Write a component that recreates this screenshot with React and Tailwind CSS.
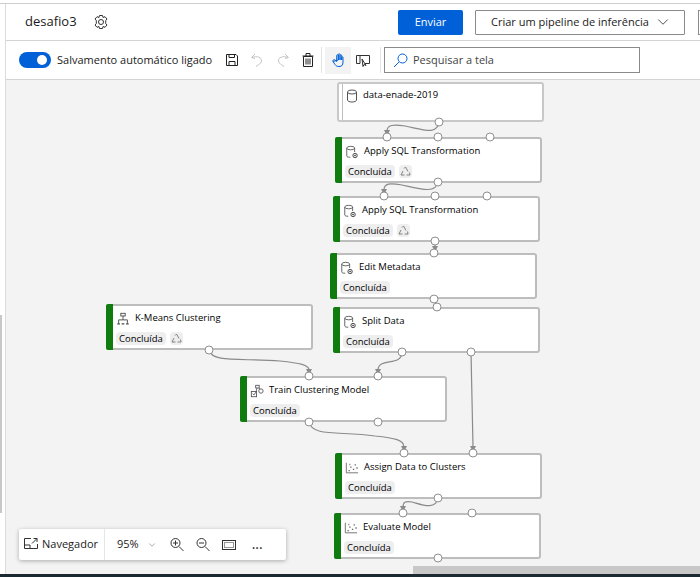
import React from "react";
import { ChevronDown } from "lucide-react";

const font = "font-['Open_Sans','Noto_Sans',sans-serif]";

// lefts are relative to the canvas, which starts at x=6
const nodes = [
  { name: "Apply SQL Transformation", pos: "left-[329px] top-[57px]", icon: "db", recycle: true },
  { name: "Apply SQL Transformation", pos: "left-[327px] top-[116px]", icon: "db", recycle: true },
  { name: "Edit Metadata", pos: "left-[324px] top-[173px]", icon: "db" },
  { name: "Split Data", pos: "left-[327px] top-[227px]", icon: "db" },
  { name: "K-Means Clustering", pos: "left-[100px] top-[224px]", icon: "tree", recycle: true },
  { name: "Train Clustering Model", pos: "left-[234px] top-[296px]", icon: "train" },
  { name: "Assign Data to Clusters", pos: "left-[329px] top-[373px]", icon: "chart" },
  { name: "Evaluate Model", pos: "left-[328px] top-[433px]", icon: "chart" },
];

const ports = [
  [439, 123], [387, 138], [438, 138], [490, 138], [438, 183],
  [384, 197], [435, 197], [487, 197], [435, 242],
  [434, 254], [434, 300], [437, 308], [402, 353], [471, 353],
  [209, 351], [309, 377], [378, 377], [309, 423], [378, 423],
  [404, 454], [473, 454], [438, 499],
  [403, 514], [472, 514], [438, 559],
];

const edges = [
  "M439 123C437 136 425 131 405 127C393 125 387 126 387 132",
  "M438 183C436 195 420 190 402 186C390 184 384 184 384 191",
  "M435 242V248",
  "M434 300L437 308",
  "M402 353C402 368 378 358 378 371",
  "M471 353L473 448",
  "M209 351C212 364 240 359 280 362C300 364 309 366 309 371",
  "M309 423C312 438 340 432 375 437C395 439 404 441 404 448",
  "M438 499C436 512 420 505 412 503C405 502 403 503 403 508",
];

const arrows = [
  [387, 137], [384, 196], [435, 253], [378, 376], [473, 453], [309, 376], [404, 453], [403, 513],
];

const NodeIcon = ({ type }) => {
  if (type === "tree") {
    return (
      <svg width="14" height="14" viewBox="0 0 16 16" fill="none" stroke="#444" strokeWidth="1">
        <rect x="5.5" y="1.5" width="5" height="3" />
        <path d="M8 4.5V9M3 13V9H13V13" />
        <path d="M1.5 13.5h3M6.5 13.5h3M11.5 13.5h3" strokeWidth="1.5" />
      </svg>
    );
  }
  if (type === "train") {
    return (
      <svg width="14" height="14" viewBox="0 0 16 16" fill="none" stroke="#555" strokeWidth="1">
        <rect x="1.5" y="8.5" width="6" height="6" />
        <path d="M3 11l1.5 1.5L7 9" />
        <rect x="6.5" y="1.5" width="4" height="3" />
        <circle cx="12.5" cy="8" r="2.5" />
        <path d="M8 4.5L7 8.5M10 4.5L11.5 6" />
      </svg>
    );
  }
  if (type === "chart") {
    return (
      <svg width="14" height="14" viewBox="0 0 16 16" fill="none" stroke="#666" strokeWidth="1">
        <path d="M1.5 2V13.5H15" />
        <path d="M4 11h1.5M6 7h1.5M9 9.5h1.5M11 4.5h1.5M13 8h1.5M5 4h1" strokeWidth="1.5" />
      </svg>
    );
  }
  return (
    <svg width="14" height="14" viewBox="0 0 16 16" fill="none" stroke="#555" strokeWidth="1">
      <path d="M2 3.5V12.5C2 13.5 3.5 14 6 14M11 3.5V8" />
      <ellipse cx="6.5" cy="3.5" rx="4.5" ry="2" />
      <circle cx="11.5" cy="12" r="2.5" stroke="#333" />
      <circle cx="11.5" cy="12" r="0.7" fill="#333" />
    </svg>
  );
};

const Recycle = () => (
  <span className="flex h-[13px] w-[13px] items-center justify-center rounded-sm bg-[#eeeeee]">
    <svg width="11" height="11" viewBox="0 0 11 11" fill="none" stroke="#777" strokeWidth="0.9">
      <path d="M4 2.5L5.5 1L8 5.5M9.5 6.5L10 9H6.5M4.5 9H1L3 5" />
    </svg>
  </span>
);

const Node = ({ name, pos, icon, recycle }) => (
  <div className={`absolute ${pos} flex h-[46px] w-[207px] rounded-[3px] border-2 border-l-0 border-[#bdbdbd] bg-white`}>
    <div className="-my-[2px] w-[7px] shrink-0 rounded-l-[2px] bg-[#107c10]" />
    <div className="flex min-w-0 flex-col pl-[3px]">
      <div className="mt-[4px] flex h-[17px] items-center gap-[3px]">
        <span className="flex w-[16px] justify-start">
          <NodeIcon type={icon} />
        </span>
        <span className="whitespace-nowrap text-[9.5px] text-black">{name}</span>
      </div>
      <div className="mt-[5px] flex items-center gap-[4px]">
        <span className="rounded-sm bg-[#eeeeee] px-[3px] text-[9.5px] leading-[13px] text-black">Concluída</span>
        {recycle && <Recycle />}
      </div>
    </div>
  </div>
);

const Graph = () => (
  <svg className="absolute inset-0" width="694" height="493" viewBox="6 81 694 493" fill="none">
    {edges.map((d) => (
      <path key={d} d={d} stroke="#8a8a8a" strokeWidth="1.2" />
    ))}
    {arrows.map(([x, y]) => (
      <path key={`${x}-${y}`} d={`M${x - 3} ${y - 6}H${x + 3}L${x} ${y}Z`} fill="#8a8a8a" />
    ))}
    {ports.map(([x, y]) => (
      <circle key={`${x}-${y}`} cx={x} cy={y} r="4" fill="white" stroke="#8f8f8f" />
    ))}
  </svg>
);

const ToolIcon = ({ children, className = "" }) => (
  <svg className={`shrink-0 ${className}`} width="16" height="16" viewBox="0 0 16 16" fill="none" stroke="currentColor" strokeWidth="1">
    {children}
  </svg>
);

const Toolbar = () => (
  <div className="flex h-[39px] items-center border-b border-[#d4d4d4] pl-[13px]">
    <div className="flex h-[16px] w-[32px] items-center justify-end rounded-full bg-[#0060d8] pr-[4px]">
      <div className="h-[10px] w-[10px] rounded-full bg-white" />
    </div>
    <span className="ml-[6px] w-[162px] whitespace-nowrap text-[11px] text-[#1a1a1a]">Salvamento automático ligado</span>
    <ToolIcon className="ml-[5px] text-[#222]">
      <path d="M2.5 2.5H12L13.5 4V13.5H2.5ZM5 13.5V9.5H11V13.5M5 2.5V5.5H10.5V2.5" />
    </ToolIcon>
    <ToolIcon className="ml-[9px] text-[#c4c4c4]">
      <path d="M6 2L2.5 5.5L6 6.5M3 5.5C8 3.5 13 5.5 12.5 9C12 12 9 13 7 14.5" />
    </ToolIcon>
    <ToolIcon className="ml-[10px] text-[#c4c4c4]">
      <path d="M10 2L13.5 5.5L10 6.5M13 5.5C8 3.5 3 5.5 3.5 9C4 12 7 13 9 14.5" />
    </ToolIcon>
    <ToolIcon className="ml-[9px] text-[#222]">
      <path d="M3.5 4.5H12.5V14.5H3.5ZM2.5 4H13.5M6 4V1.5H10V4M6 6.5V12.5M8 6.5V12.5M10 6.5V12.5" />
    </ToolIcon>
    <div className="ml-[5px] h-[26px] w-px bg-[#e4e4e4]" />
    <div className="ml-[3px] flex h-[27px] w-[26px] items-center justify-center bg-[#f3f3f3]">
      <ToolIcon className="text-[#0060d8]">
        <path d="M3 9.5L5 12.5C6 14 7 14.5 9 14.5C12 14.5 13 13 13 10V5.5C13 4.5 11.7 4.5 11.7 5.5V8M11.7 8V3.5C11.7 2.5 10 2.5 10 3.5V8M10 8V2.5C10 1.5 8.3 1.5 8.3 2.5V8M8.3 8V3.5C8.3 2.5 6.7 2.5 6.7 3.5V9.5L5 8C4 7 2.5 8 3 9.5Z" />
      </ToolIcon>
    </div>
    <ToolIcon className="ml-[4px] text-[#333]">
      <path d="M5 11.5H1.5V3.5H14.5V11.5H10M5 3.5V11.5M7 7L11 13.5L9 12.5L8 14.5Z" />
    </ToolIcon>
    <div className="ml-[9px] h-[26px] w-px bg-[#e4e4e4]" />
    <div className="ml-[3px] flex h-[26px] w-[256px] items-center border border-[#8a8a8a] pl-[8px]">
      <svg width="15" height="15" viewBox="0 0 15 15" fill="none" stroke="#0060d8" strokeWidth="1">
        <circle cx="9.5" cy="5.5" r="4.5" />
        <path d="M6 9L1 14" />
      </svg>
      <span className="ml-[5px] text-[11px] text-[#444]">Pesquisar a tela</span>
    </div>
  </div>
);

const Navigator = () => (
  <div className="absolute left-[13px] top-[449px] flex h-[31px] w-[267px] items-center rounded-[2px] bg-white text-[11px] text-[#222] shadow-[0_1px_4px_rgba(0,0,0,0.3)]">
    <div className="flex h-full w-[86px] items-center border-r border-[#e6e6e6] pl-[4px]">
      <ToolIcon className="mb-[2px] text-[#333]">
        <path d="M1.5 2.5H8M14.5 8V12.5H1.5V2.5M1.5 9H7V12.5M9 7.5L14 2.5M10.5 2.5H14V6" />
      </ToolIcon>
      <span className="ml-[3px]">Navegador</span>
    </div>
    <span className="ml-[12px]">95%</span>
    <ChevronDown className="ml-[8px] text-[#555]" size={10} strokeWidth={1.2} />
    <ToolIcon className="ml-[12px] text-[#333]">
      <circle cx="6.5" cy="6" r="4.5" />
      <path d="M10 9.5L14.5 14M4 6H9M6.5 3.5V8.5" />
    </ToolIcon>
    <ToolIcon className="ml-[10px] text-[#333]">
      <circle cx="6.5" cy="6" r="4.5" />
      <path d="M10 9.5L14.5 14M4 6H9" />
    </ToolIcon>
    <ToolIcon className="ml-[10px] text-[#333]">
      <rect x="1.5" y="3.5" width="13" height="9" />
      <path d="M3.5 5.5H12.5V10.5H3.5Z" strokeDasharray="1 1" />
    </ToolIcon>
    <span className="ml-[15px] mb-[2px] text-[14px] leading-none">...</span>
  </div>
);

export default function App() {
  return (
    <div className={`flex h-[577px] w-[700px] flex-col overflow-hidden bg-white ${font}`}>
      <div className="mt-[3px] flex flex-1 border-t border-[#cfcfcf]">
        <div className="relative w-[6px] shrink-0 border-r border-[#dcdcdc] bg-white">
          <div className="absolute left-0 top-[311px] h-[198px] w-[2px] bg-[#c8c8c8]" />
        </div>
        <div className="flex min-w-0 flex-1 flex-col">
          <div className="flex h-[37px] items-center border-b border-[#d4d4d4] pl-[19px]">
            <span className="w-[68px] shrink-0 text-[13px] text-[#1a1a1a]">desafio3</span>
            <ToolIcon className="text-[#333]">
              <path d="M6.5 1.5H9.5L10 3.5L12 2.7L14 5L12.7 6.5V9.5L14 11L12 13.3L10 12.5L9.5 14.5H6.5L6 12.5L4 13.3L2 11L3.3 9.5V6.5L2 5L4 2.7L6 3.5Z" />
              <circle cx="8" cy="8" r="2.5" />
            </ToolIcon>
            <button className="ml-[289px] h-[25px] w-[65px] shrink-0 rounded-[2px] bg-[#0060d8] text-[11px] text-white">Enviar</button>
            <button className="ml-[12px] flex h-[25px] w-[210px] shrink-0 items-center whitespace-nowrap rounded-[1px] border border-[#8a8a8a] pl-[15px] text-[11px] text-[#1a1a1a]">
              Criar um pipeline de inferência
              <ChevronDown className="ml-[5px]" size={18} strokeWidth={1} />
            </button>
            <div className="ml-[13px] h-[25px] w-[10px] shrink-0 border border-[#8a8a8a]" />
          </div>
          <Toolbar />
          <div className="relative flex-1 overflow-hidden bg-[#f3f3f3]">
            <div className="absolute left-[331px] top-[2px] flex h-[40px] w-[207px] rounded-[3px] border-2 border-[#c8c8c8] bg-white">
              <div className="w-[4px] border-r border-[#bdbdbd]" />
              <div className="flex h-[19px] items-center gap-[5px] pl-[3px] pt-[4px]">
                <svg width="12" height="14" viewBox="0 0 12 14" fill="none" stroke="#555">
                  <ellipse cx="6" cy="3" rx="4.5" ry="2" />
                  <path d="M1.5 3V11C1.5 12 3 13 6 13C9 13 10.5 12 10.5 11V3" />
                </svg>
                <span className="whitespace-nowrap text-[9.5px] text-black">data-enade-2019</span>
              </div>
            </div>
            {nodes.map((n) => (
              <Node key={n.pos} {...n} />
            ))}
            <Graph />
            <Navigator />
            <div className="absolute bottom-0 left-[407px] h-[8px] w-[287px] bg-[#c8c8c8]" />
          </div>
        </div>
      </div>
      <div className="h-[3px] bg-[#1b2a30]" />
    </div>
  );
}
